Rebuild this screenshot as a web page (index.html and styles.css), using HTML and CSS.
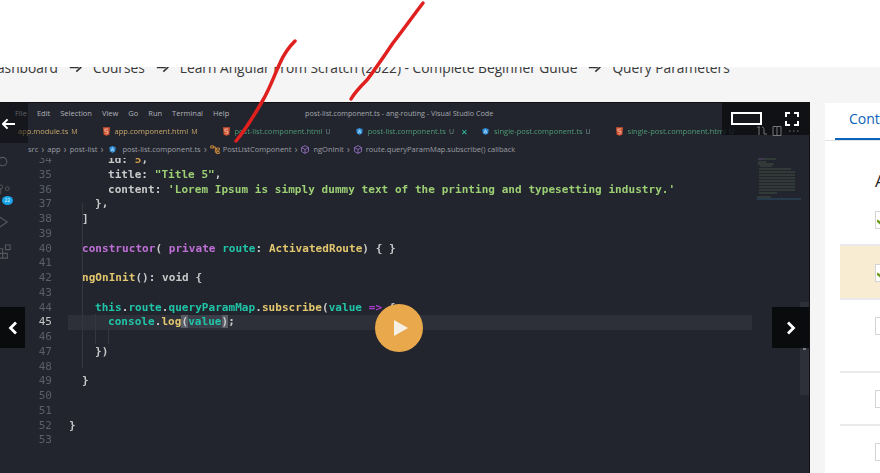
FILE: index.html
```html
<!DOCTYPE html>
<html lang="en">
<head>
<meta charset="utf-8">
<title>Query Parameters</title>
<link rel="stylesheet" href="styles.css">
</head>
<body>
<svg class="defs" width="0" height="0">
  <symbol id="i-arrow" viewBox="0 0 16 12"><path d="M1 1.500h9.500L14.500 6 9 11M1 6h11" fill="none" stroke="#333" stroke-width="2"/></symbol>
  <symbol id="i-html" viewBox="0 0 10 12"><path d="M0 0h10L9 10.500 5 12 1 10.500z" fill="#d2522f"/><path d="M7.500 2.500h-5l.3 3.200h4.300l-.3 2.800L5 9.200l-1.800-.7" fill="none" stroke="#f3d3c6" stroke-width="1"/></symbol>
  <symbol id="i-ang" viewBox="0 0 12 12"><path d="M6 0l5.500 2 -.8 7L6 12 1.300 9 .5 2z" fill="#2f8fd8"/><path d="M3.500 9L6 3l2.500 6M4.500 7h3" fill="none" stroke="#bfe3fb" stroke-width="1.200"/></symbol>
  <symbol id="i-cls" viewBox="0 0 14 12"><path d="M1 1h4v3H1zM9 4h4v3H9zM9 9h4v2.500H9zM5 2.500h2.500V10H9M7.500 5.500H9" fill="none" stroke="#d8923f" stroke-width="1.300"/></symbol>
  <symbol id="i-fn" viewBox="0 0 12 12"><path d="M6 .8l4.700 2.600v5.200L6 11.200 1.300 8.600V3.400zM1.300 3.400L6 6l4.700-2.600M6 6v5.200" fill="none" stroke="#9a74c8" stroke-width="1.100"/></symbol>
</svg>
<header class="topbar"></header>
<nav class="crumbs">
  <span>Dashboard</span>
  <svg class="crumb-arrow"><use href="#i-arrow"/></svg>
  <span>Courses</span>
  <svg class="crumb-arrow"><use href="#i-arrow"/></svg>
  <span>Learn Angular From Scratch (2022) - Complete Beginner Guide</span>
  <svg class="crumb-arrow"><use href="#i-arrow"/></svg>
  <span>Query Parameters</span>
</nav>
<main class="layout">
  <section class="video">
    <div class="screen">
      <div class="titlebar">
        <span class="menu">File</span><span class="menu">Edit</span><span class="menu">Selection</span><span class="menu">View</span><span class="menu">Go</span><span class="menu">Run</span><span class="menu">Terminal</span><span class="menu">Help</span>
        <span class="wintitle">post-list.component.ts - ang-routing - Visual Studio Code</span>
      </div>
      <div class="tabs">
        <div class="tab mod tab-first"><span>app.module.ts</span><b>M</b></div>
        <div class="tab mod"><svg class="ic"><use href="#i-html"/></svg><span>app.component.html</span><b>M</b></div>
        <div class="tab new"><svg class="ic"><use href="#i-html"/></svg><span>post-list.component.html</span><b>U</b></div>
        <div class="tab new tab-open"><svg class="ic"><use href="#i-ang"/></svg><span>post-list.component.ts</span><b>U</b><em>✕</em></div>
        <div class="tab new"><svg class="ic"><use href="#i-ang"/></svg><span>single-post.component.ts</span><b>U</b></div>
        <div class="tab new"><svg class="ic"><use href="#i-html"/></svg><span>single-post.component.html</span><b>U</b></div>
      </div>
      <div class="path">
        <span>src</span><u>›</u><span>app</span><u>›</u><span>post-list</span><u>›</u><svg class="ic"><use href="#i-ang"/></svg><span>post-list.component.ts</span><u>›</u><svg class="ic wide"><use href="#i-cls"/></svg><span>PostListComponent</span><u>›</u><svg class="ic wide"><use href="#i-fn"/></svg><span>ngOnInit</span><u>›</u><svg class="ic wide"><use href="#i-fn"/></svg><span>route.queryParamMap.subscribe() callback</span>
      </div>
      <div class="editor">
        <aside class="activity">
          <svg class="act" viewBox="0 0 16 16"><circle cx="6" cy="7" r="4.500" fill="none" stroke="#55585f" stroke-width="1.200"/><path d="M3 11l-3 3" stroke="#55585f" stroke-width="1.200"/></svg>
          <div class="act-git"><svg class="act" viewBox="0 0 16 16"><circle cx="4" cy="3" r="2" fill="none" stroke="#55585f"/><circle cx="11" cy="5" r="2" fill="none" stroke="#55585f"/><path d="M4 5v6" stroke="#55585f"/></svg><span class="badge">22</span></div>
          <svg class="act" viewBox="0 0 16 16"><path d="M1 1l10 6.500L1 14z" fill="none" stroke="#55585f" stroke-width="1.200"/></svg>
          <svg class="act" viewBox="0 0 16 16"><path d="M1 5h5v5H1zM1 10h5v5H1zM6 10h5v5H6zM9 1h5v5H9z" fill="none" stroke="#55585f" stroke-width="1.200"/></svg>
        </aside>
        <div class="code">
          <i class="guide g1"></i><i class="guide g2"></i><i class="guide g3"></i>
          <div class="line"><span class="ln">34</span><span class="src i3"><span class="t">id: </span><span class="n">5</span><span class="t">,</span></span></div>
          <div class="line"><span class="ln">35</span><span class="src i3"><span class="t">title: </span><span class="s">"Title 5"</span><span class="t">,</span></span></div>
          <div class="line"><span class="ln">36</span><span class="src i3"><span class="t">content: </span><span class="s">'Lorem Ipsum is simply dummy text of the printing and typesetting industry.'</span></span></div>
          <div class="line"><span class="ln">37</span><span class="src i2"><span class="t">},</span></span></div>
          <div class="line"><span class="ln">38</span><span class="src i1"><span class="t">]</span></span></div>
          <div class="line"><span class="ln">39</span></div>
          <div class="line"><span class="ln">40</span><span class="src i1"><span class="k">constructor</span><span class="t">( </span><span class="k">private</span> <span class="v">route</span><span class="t">: </span><span class="y">ActivatedRoute</span><span class="t">) { }</span></span></div>
          <div class="line"><span class="ln">41</span></div>
          <div class="line"><span class="ln">42</span><span class="src i1"><span class="y">ngOnInit</span><span class="t">(): void {</span></span></div>
          <div class="line"><span class="ln">43</span></div>
          <div class="line"><span class="ln">44</span><span class="src i2"><span class="v">this</span><span class="t">.</span><span class="v">route</span><span class="t">.</span><span class="v">queryParamMap</span><span class="t">.</span><span class="y">subscribe</span><span class="t">(</span><span class="v">value</span> <span class="k2">=&gt;</span> <span class="t">{</span></span></div>
          <div class="line active"><span class="ln">45</span><span class="src i3"><span class="v">console</span><span class="t">.</span><span class="y">log</span><span class="br">(</span><span class="v sel">value</span><span class="br">)</span><span class="t">;</span></span></div>
          <div class="line"><span class="ln">46</span></div>
          <div class="line"><span class="ln">47</span><span class="src i2"><span class="t">})</span></span></div>
          <div class="line"><span class="ln">48</span></div>
          <div class="line"><span class="ln">49</span><span class="src i1"><span class="t">}</span></span></div>
          <div class="line"><span class="ln">50</span></div>
          <div class="line"><span class="ln">51</span></div>
          <div class="line"><span class="ln">52</span><span class="src"><span class="t">}</span></span></div>
          <div class="line"><span class="ln">53</span></div>
        </div>
        <svg class="minimap" viewBox="0 0 46 44">
          <path d="M3 1h6" stroke="#8a62a6" stroke-width="0.600"/>
          <path d="M9 1h12M3 4h8M3 6h16M5 8h12M4 11h32M4 14h36M4 17h36M4 20h36M4 23h36M4 26h36M4 29h36M4 32h36M4 35h18M2 39h14" stroke="#586d4d" stroke-width="0.600"/>
          <path d="M2 41h44" stroke="#2e5a78" stroke-width="0.800"/>
        </svg>
        <div class="scroll"><i class="thumb"></i></div>
      </div>
    </div>
    <div class="shade shade-back"><svg class="back" viewBox="0 0 14 12"><path d="M6 1L1 6l5 5M1 6h13" fill="none" stroke="#fff" stroke-width="2.200"/></svg></div>
    <div class="shade shade-tools">
      <i class="winbox"></i>
      <svg class="full" viewBox="0 0 14 14"><path d="M1 5V1h4M9 1h4v4M13 9v4H9M5 13H1V9" fill="none" stroke="#fff" stroke-width="2"/></svg>
      <svg class="ghost" viewBox="0 0 60 12"><path d="M1 2h3M6 2c2 0 2 2 2 4v3M3 2v8M8 9h3" fill="none" stroke="#777" /><path d="M17 1.500h8v9h-8zM21 1.500v9" fill="none" stroke="#777"/><path d="M33 6h1.500M37 6h1.500M41 6h1.500" stroke="#777"/></svg>
    </div>
    <div class="shade nav-prev"><svg class="chev" viewBox="0 0 10 14"><path d="M8 1.500L2.500 7 8 12.500" fill="none" stroke="#fff" stroke-width="2.800"/></svg></div>
    <div class="shade nav-next"><svg class="chev" viewBox="0 0 10 14"><path d="M2 1.500L7.500 7 2 12.500" fill="none" stroke="#fff" stroke-width="2.800"/></svg></div>
    <div class="play"><svg viewBox="0 0 16 18"><path d="M1 1l14 8-14 8z" fill="#f5efe6"/></svg></div>
  </section>
  <aside class="side">
    <div class="side-tabs"><span class="side-tab">Content</span></div>
    <h2 class="side-head">About</h2>
    <div class="row r1"><i class="cb on"></i></div>
    <div class="row r2"><i class="cb on"></i></div>
    <div class="row r3"><i class="cb"></i></div>
    <div class="row r4"><i class="cb"></i></div>
    <div class="row r5"><i class="cb"></i></div>
  </aside>
</main>
<svg class="ink" viewBox="0 0 880 473">
  <path d="M295 41C288 48 283 56 280 63C274 76 270 88 263 100C255 114 246 129 236 141" />
  <path d="M423 3C413 16 403 30 393 43C384 56 376 68 367 80C361 86 355 92 351 99" />
</svg>
</body>
</html>
```
FILE: styles.css
```css
* { box-sizing: border-box; }
html, body { margin: 0; height: 473px; overflow: hidden; }
body { background: #f5f5f5; font-family: "Open Sans", sans-serif; color: #333; }
.defs { position: absolute; }

.topbar { position: relative; z-index: 2; height: 67px; background: #fff; }
.crumbs { display: flex; align-items: center; gap: 11px; height: 20px; margin: -10px 0 25px -13px; font-size: 13.750px; white-space: nowrap; color: #3a3a3a; }
.crumb-arrow { width: 13px; height: 11px; flex: none; }

.layout { display: flex; gap: 15px; height: 371px; }

.video { position: relative; flex: none; width: 810px; height: 371px; background: #22252e; border-top: 1px solid #111; border-right: 1px solid #111; overflow: hidden; }
.screen { height: 100%; display: flex; flex-direction: column; filter: blur(0.35px); font-size: 7.500px; color: #b4b6bb; }

.titlebar { position: relative; display: flex; align-items: center; gap: 10px; height: 19px; padding: 0 0 0 15px; background: #22252e; white-space: nowrap; }
.menu { color: #b0b2b8; font-size: 7.500px; }
.wintitle { position: absolute; left: 305px; font-size: 7.200px; color: #a5a7ad; }

.tabs { display: flex; align-items: center; height: 18px; white-space: nowrap; }
.tab { display: flex; align-items: center; gap: 3px; margin-right: 25px; }
.tab .ic { margin-right: 2px; }
.tab b { font-weight: 400; font-size: 7px; }
.tab em { font-style: normal; font-size: 8px; color: #2ec4a6; margin-left: 4px; }
.tab-first { margin-left: 18px; }
.tab-open { margin-right: 14px; }
.mod span, .mod b { color: #c8a66a; }
.new span { color: #4f9a73; }
.new b { color: #6f8f8a; }

.ic { display: block; flex: none; width: 7px; height: 9px; }
.ic.wide { width: 10px; }

.path { position: relative; z-index: 1; display: flex; align-items: center; gap: 3px; height: 18px; padding-left: 28px; background: #22252e; white-space: nowrap; color: #9b9da3; }
.path u { text-decoration: none; font-size: 10px; line-height: 10px; color: #8a8c92; }
.path .ic { margin: 0 3px; }
.path .ic.wide { margin: 0; }

.editor { position: relative; flex: 1; display: flex; min-height: 0; }
.activity { position: relative; z-index: 1; flex: none; width: 15px; display: flex; flex-direction: column; align-items: flex-start; gap: 14px; margin: -3px 0 0 -3px; }
.act { display: block; width: 15px; height: 15px; }
.act-git { position: relative; height: 17px; }
.badge { position: absolute; left: 5px; top: 12px; width: 11px; height: 9px; border-radius: 50%; background: #1aa3ea; color: #dff; font-size: 5px; line-height: 9px; text-align: center; }

.code { position: relative; flex: 1; margin-top: -5px; font-family: "DejaVu Sans Mono", monospace; font-size: 11px; font-weight: 700; letter-spacing: 0.050px; }
.line { display: flex; height: 14.750px; line-height: 14.750px; white-space: pre; }
.ln { flex: none; width: 40px; text-align: right; font-weight: 400; letter-spacing: 0; color: #5c5f67; }
.src { padding-left: 17px; }
.i1 { padding-left: 30px; }
.i2 { padding-left: 43px; }
.i3 { padding-left: 56px; }
.active { background: linear-gradient(to right, transparent 56px, #2d3039 56px, #2d3039 740px, transparent 740px); }
.active .ln { color: #c6c6c6; }
.t { color: #c9c9c9; }
.n { color: #d19a4a; }
.s { color: #9ccf74; }
.k { color: #c06fd8; }
.k2 { color: #a83cc8; }
.v { color: #20c5a8; }
.y { color: #e3c76e; }
.br { background: #5a5d65; color: #c9c9c9; }
.sel { box-shadow: 1px 0 0 #d0d0d0; background: #3b3f49; }
.guide { position: absolute; width: 1px; background: #34373f; }
.g1 { left: 70px; top: 50px; height: 165px; }
.g2 { left: 83px; top: 161px; height: 30px; }
.g3 { left: 96px; top: 176px; height: 15px; }

.minimap { position: absolute; left: 755px; top: 0; width: 46px; height: 44px; }
.scroll { position: absolute; right: 0; top: 144px; width: 9px; height: 93px; background: #2d3039; }
.thumb { display: block; width: 3px; height: 4px; margin: 44px 0 0 3px; background: #777a82; }

.shade { position: absolute; background: rgba(8, 9, 11, 0.920); display: flex; align-items: center; justify-content: center; }
.shade-back { left: 0; top: 0; width: 28px; height: 40px; justify-content: flex-start; padding-left: 2px; background: rgba(8, 9, 11, 0.500); }
.back { width: 13px; height: 12px; margin-top: 1px; }
.shade-tools { right: 0; top: 0; width: 87px; height: 32px; align-items: flex-start; justify-content: flex-start; padding: 9px 0 0 9px; gap: 23px; background: rgba(8, 9, 11, 0.700); }
.winbox { display: block; width: 31px; height: 13px; border: 2px solid #fff; background: #16171b; }
.full { width: 14px; height: 14px; }
.ghost { position: absolute; left: 34px; top: 22px; width: 60px; height: 12px; }
.nav-prev { left: 0; top: 204px; width: 25px; height: 41px; }
.nav-next { right: 0; top: 204px; width: 37px; height: 41px; }
.chev { width: 10px; height: 14px; }
.play { position: absolute; left: 375px; top: 201px; width: 48px; height: 48px; border-radius: 50%; background: #e9a84c; display: flex; align-items: center; justify-content: center; padding-left: 4px; }
.play svg { width: 16px; height: 18px; }

.side { flex: none; width: 55px; margin-top: 1px; overflow: hidden; background: #fff; white-space: nowrap; }
.side-tabs { height: 38px; padding-left: 10px; border-bottom: 1px solid #e2e2e2; }
.side-tab { display: block; width: 60px; height: 37px; padding-left: 14px; font-size: 14px; line-height: 32px; color: #0b63ba; border-bottom: 2px solid #0b63ba; }
.side-head { margin: 29px 0 19px 50px; font-size: 17px; font-weight: 400; line-height: 22px; color: #222; }
.row { margin-left: 15px; padding-left: 35px; }
.cb { display: block; width: 18px; height: 18px; background: #fff; border: 1px solid #d4d4d4; position: relative; }
.cb.on::after { content: ""; position: absolute; left: 1px; top: 3px; width: 10px; height: 10px; background: #6f9e1e; clip-path: polygon(0 45%, 30% 60%, 85% 0, 100% 25%, 35% 100%, 0 70%); }
.r1 { height: 35px; border-bottom: 2px solid #eaeaea; }
.r2 { height: 54px; padding-top: 18px; background: #f8edd3; border-bottom: 2px solid #eaeaea; }
.r3 { height: 73px; padding-top: 17px; border-bottom: 2px solid #eaeaea; }
.r4 { height: 53px; padding-top: 17px; border-bottom: 2px solid #eaeaea; }
.r5 { height: 50px; padding-top: 17px; }

.ink { position: absolute; left: 0; top: 0; width: 880px; height: 473px; z-index: 5; pointer-events: none; }
.ink path { fill: none; stroke: #e01f1f; stroke-width: 3.500; stroke-linecap: round; stroke-linejoin: round; }
```
